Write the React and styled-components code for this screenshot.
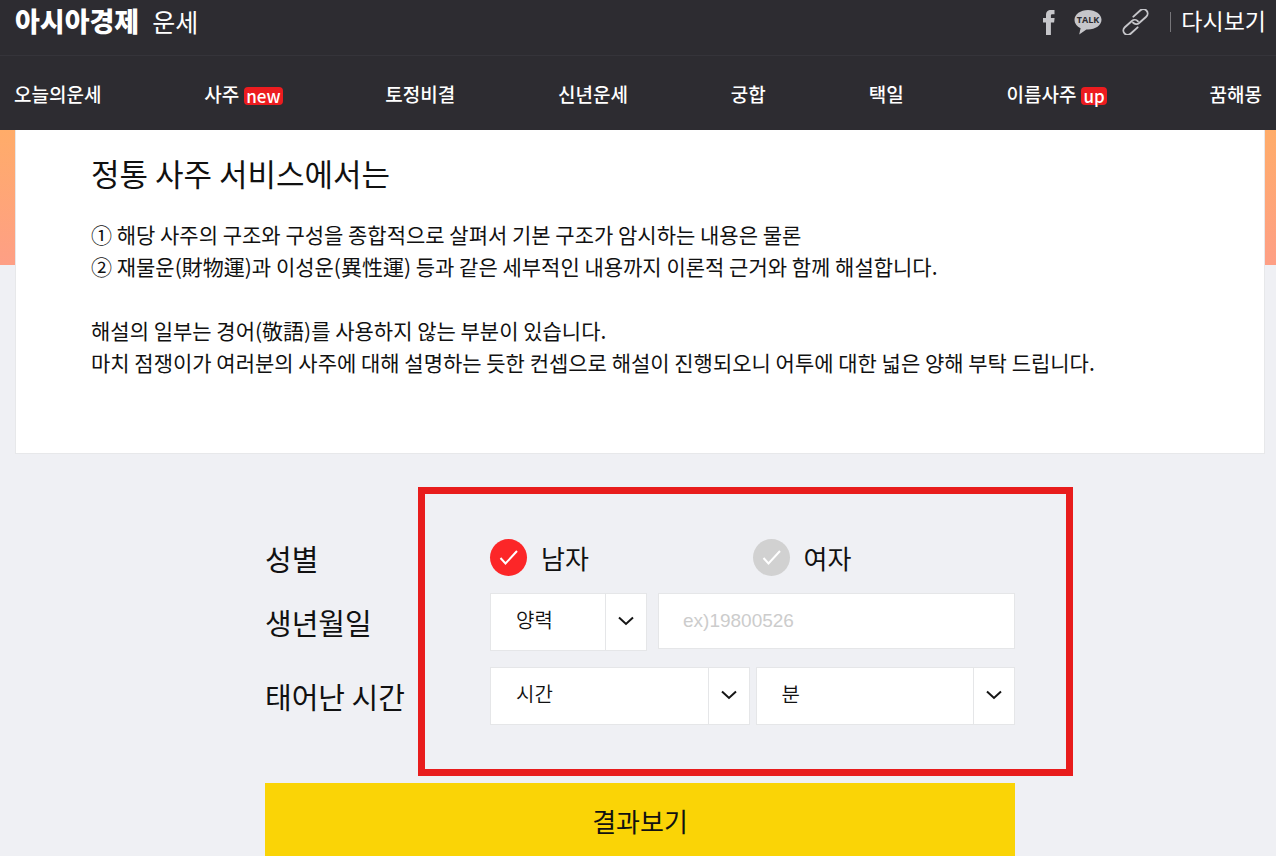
import React, { useState } from "react";
import styled, { createGlobalStyle } from "styled-components";

const GlobalStyle = createGlobalStyle`
  *, *::before, *::after {
    box-sizing: border-box;
  }
  html {
    scrollbar-width: none;
  }
  body {
    margin: 0;
    background: #eff0f4;
    color: #111;
    font-family: "Noto Sans CJK KR", "Noto Sans", sans-serif;
  }
  button, input, select {
    margin: 0;
    font-family: inherit;
  }
`;

const Header = styled.header`
  background: #2d2c31;
  color: #fff;
`;

const TopBar = styled.div`
  display: flex;
  align-items: center;
  justify-content: space-between;
  height: 56px;
  padding: 0 10px 12px 15px;
  border-bottom: 1px solid #35343a;
`;

const Brand = styled.a`
  display: flex;
  align-items: center;
  gap: 13px;
  padding-bottom: 2px;
  color: #fff;
  font-size: 25px;
  line-height: 32px;
  text-decoration: none;
`;

const Logo = styled.strong`
  font-size: 27px;
  font-weight: 900;
`;

const Tools = styled.div`
  display: flex;
  align-items: center;
`;

const ShareLinks = styled.div`
  display: flex;
  align-items: center;
  gap: 19px;
  padding-right: 20px;
  border-right: 1px solid #77767a;
  height: 20px;
`;

const IconButton = styled.button`
  display: flex;
  padding: 0;
  border: 0;
  background: none;
  color: #c6c6ca;
  cursor: pointer;
`;

const ReplayLink = styled.a`
  padding: 0 0 4px 10px;
  color: #fff;
  font-size: 23px;
  line-height: 32px;
  text-decoration: none;
`;

const Nav = styled.nav`
  display: flex;
  align-items: center;
  justify-content: space-between;
  height: 74px;
  padding: 2px 14px 0;
`;

const NavLink = styled.a`
  display: flex;
  align-items: center;
  gap: 5px;
  color: #fff;
  font-size: 19px;
  font-weight: 500;
  line-height: 28px;
  text-decoration: none;
  white-space: nowrap;
`;

const Badge = styled.span`
  height: 18px;
  margin-top: 3px;
  padding: 0 2px;
  border-radius: 4px;
  background: #ec1c1f;
  font-size: 17px;
  line-height: 17px;
`;

const Main = styled.main`
  padding: 0 11px 0 15px;
  background: linear-gradient(#ffac69, #fe9f85) no-repeat;
  background-size: 100% 135px;
`;

const Intro = styled.section`
  min-height: 324px;
  padding: 20px 75px;
  border: 1px solid #e7e8ea;
  border-top: 0;
  background: #fff;
`;

const Title = styled.h1`
  margin: 0 0 22px;
  font-size: 31px;
  font-weight: 400;
  line-height: 46px;
`;

const Text = styled.p`
  margin: 0 0 32px;
  font-size: 21px;
  line-height: 32px;
`;

const Form = styled.form`
  position: relative;
  max-width: 750px;
  margin: 0 auto;
  padding-top: 85px;
`;

// red frame drawn over the fields the reader has to fill in
const Highlight = styled.div`
  position: absolute;
  top: 33px;
  right: -58px;
  bottom: 85px;
  left: 153px;
  border: 7px solid #e81c1c;
  pointer-events: none;
`;

const Fields = styled.div`
  display: grid;
  gap: 16px;
`;

const Field = styled.div`
  display: grid;
  grid-template-columns: 225px 1fr;
  align-items: center;
`;

const FieldName = styled.label`
  font-size: 29px;
  line-height: 38px;
`;

const Controls = styled.div`
  display: grid;
  grid-template-columns: ${({ columns }) => columns};
  gap: ${({ gap }) => gap || 0}px;
`;

const RadioLabel = styled.label`
  display: flex;
  align-items: flex-start;
  gap: 14px;
  font-size: 26px;
  line-height: 38px;
  cursor: pointer;
`;

const RadioMark = styled.span`
  display: grid;
  width: 37px;
  height: 37px;

  > * {
    grid-area: 1 / 1;
  }
  svg {
    pointer-events: none;
  }
`;

const RadioInput = styled.input`
  appearance: none;
  width: 37px;
  height: 37px;
  border-radius: 50%;
  background: #d1d1d1;

  &:checked {
    background: #fc2628;
  }
`;

const SelectBox = styled.div`
  display: grid;
  grid-template-columns: 1fr 41px;
  height: 58px;
  border: 1px solid #e5e6e8;
  background: #fff;
`;

const StyledSelect = styled.select`
  appearance: none;
  grid-area: 1 / 1 / 2 / 3;
  min-width: 0;
  padding: 0 50px 6px 25px;
  border: 0;
  background: none;
  color: #111;
  font-size: 20px;
  font-weight: 350;
`;

const Arrow = styled.span`
  display: flex;
  grid-area: 1 / 2;
  align-items: center;
  justify-content: center;
  padding-bottom: 2px;
  border-left: 1px solid #e5e6e8;
  pointer-events: none;
`;

const DateInput = styled.input`
  width: 100%;
  height: 56px;
  padding: 0 24px;
  border: 1px solid #e5e6e8;
  border-radius: 0;
  background: #fff;
  font-family: "Liberation Sans", Arial, sans-serif;
  font-size: 19px;

  &::placeholder {
    color: #ccc;
  }
`;

const SubmitButton = styled.button`
  width: 100%;
  height: 78px;
  margin-top: 58px;
  padding: 0 0 3px;
  border: 0;
  background: #fad406;
  color: #111;
  font-size: 26px;
  line-height: 40px;
  cursor: pointer;
`;

const FacebookIcon = () => (
  <svg width="12" height="26" viewBox="0 0 12 26" fill="currentColor">
    <path d="M3 26V13.5H0V9h3V6.2C3 2.4 4.8 1 8 1h3.5v4.2H9.3C8.2 5.2 7.9 5.7 7.9 6.7V9h3.7l-.5 4.5H7.9V26z" />
  </svg>
);

const TalkIcon = () => (
  <svg width="28" height="26" viewBox="0 0 28 26">
    <path
      fill="currentColor"
      d="M14 1C6.5 1 .5 5.3.5 10.8c0 3.7 2.5 6.8 6.1 8.500L5.200 25.500l7.200-5.100c.5.1 1 .1 1.600.1 7.500 0 13.500-4.300 13.500-9.700S21.500 1 14 1z"
    />
    <text
      x="14"
      y="14"
      fill="#2d2c31"
      fontFamily="Open Sans, sans-serif"
      fontSize="9"
      fontWeight="700"
      textAnchor="middle"
    >
      TALK
    </text>
  </svg>
);

const LinkIcon = () => (
  <svg width="29" height="26" viewBox="0 0 29 26" fill="none" stroke="currentColor" strokeWidth="1.9" strokeLinecap="round">
    <g transform="translate(14.5 13) rotate(-42)">
      <path d="M2-5.400H11.500a4.300 4.300 0 0 1 0 8.600H2a4.300 4.300 0 0 1-4.300-4.300" />
      <path d="M-2 5.400H-11.500a4.300 4.300 0 0 1 0-8.600H-2a4.300 4.300 0 0 1 4.300 4.300" />
    </g>
  </svg>
);

const CheckIcon = () => (
  <svg width="37" height="37" viewBox="0 0 37 37" fill="none" stroke="#fff" strokeWidth="2">
    <path d="M10.5 19l5 5.500 11.500-12.500" />
  </svg>
);

const ChevronIcon = () => (
  <svg width="16" height="10" viewBox="0 0 16 10" fill="none" stroke="#151515" strokeWidth="2">
    <path d="M1 1.5l7 6.500 7-6.500" />
  </svg>
);

const menu = [
  { name: "오늘의운세" },
  { name: "사주", badge: "new" },
  { name: "토정비결" },
  { name: "신년운세" },
  { name: "궁합" },
  { name: "택일" },
  { name: "이름사주", badge: "up" },
  { name: "꿈해몽" },
];

const Select = ({ options, ...props }) => (
  <SelectBox>
    <StyledSelect {...props}>
      {options.map(option => (
        <option key={option}>{option}</option>
      ))}
    </StyledSelect>
    <Arrow>
      <ChevronIcon />
    </Arrow>
  </SelectBox>
);

const Radio = ({ label, ...props }) => (
  <RadioLabel>
    <RadioMark>
      <RadioInput type="radio" {...props} />
      <CheckIcon />
    </RadioMark>
    {label}
  </RadioLabel>
);

const hours = Array.from({ length: 24 }, (_, i) => `${i}시`);
const minutes = Array.from({ length: 60 }, (_, i) => `${i}분`);

const App = () => {
  const [gender, setGender] = useState("남자");
  return (
    <>
      <GlobalStyle />
      <Header>
        <TopBar>
          <Brand href="#">
            <Logo>아시아경제</Logo>
            <span>운세</span>
          </Brand>
          <Tools>
            <ShareLinks>
              <IconButton type="button" aria-label="페이스북 공유">
                <FacebookIcon />
              </IconButton>
              <IconButton type="button" aria-label="카카오톡 공유">
                <TalkIcon />
              </IconButton>
              <IconButton type="button" aria-label="링크 복사">
                <LinkIcon />
              </IconButton>
            </ShareLinks>
            <ReplayLink href="#">다시보기</ReplayLink>
          </Tools>
        </TopBar>
        <Nav>
          {menu.map(({ name, badge }) => (
            <NavLink href="#" key={name}>
              {name}
              {badge && <Badge>{badge}</Badge>}
            </NavLink>
          ))}
        </Nav>
      </Header>
      <Main>
        <Intro>
          <Title>정통 사주 서비스에서는</Title>
          <Text>
            ① 해당 사주의 구조와 구성을 종합적으로 살펴서 기본 구조가 암시하는 내용은 물론
            <br />
            ② 재물운(財物運)과 이성운(異性運) 등과 같은 세부적인 내용까지 이론적 근거와 함께 해설합니다.
          </Text>
          <Text>
            해설의 일부는 경어(敬語)를 사용하지 않는 부분이 있습니다.
            <br />
            마치 점쟁이가 여러분의 사주에 대해 설명하는 듯한 컨셉으로 해설이 진행되오니 어투에 대한 넓은 양해 부탁 드립니다.
          </Text>
        </Intro>
        <Form onSubmit={e => e.preventDefault()}>
          <Fields>
            <Field role="radiogroup" aria-labelledby="gender">
              <FieldName as="span" id="gender">성별</FieldName>
              <Controls columns="1fr 1fr">
                {["남자", "여자"].map(value => (
                  <Radio
                    key={value}
                    name="gender"
                    label={value}
                    checked={gender === value}
                    onChange={() => setGender(value)}
                  />
                ))}
              </Controls>
            </Field>
            <Field>
              <FieldName htmlFor="birth">생년월일</FieldName>
              <Controls columns="157px 1fr" gap={11}>
                <Select aria-label="양력 음력" options={["양력", "음력"]} />
                <DateInput id="birth" placeholder="ex)19800526" />
              </Controls>
            </Field>
            <Field>
              <FieldName htmlFor="hour">태어난 시간</FieldName>
              <Controls columns="1fr 1fr" gap={6}>
                <Select id="hour" options={["시간", ...hours]} />
                <Select aria-label="분" options={["분", ...minutes]} />
              </Controls>
            </Field>
          </Fields>
          <SubmitButton type="submit">결과보기</SubmitButton>
          <Highlight />
        </Form>
      </Main>
    </>
  );
};

export default App;
